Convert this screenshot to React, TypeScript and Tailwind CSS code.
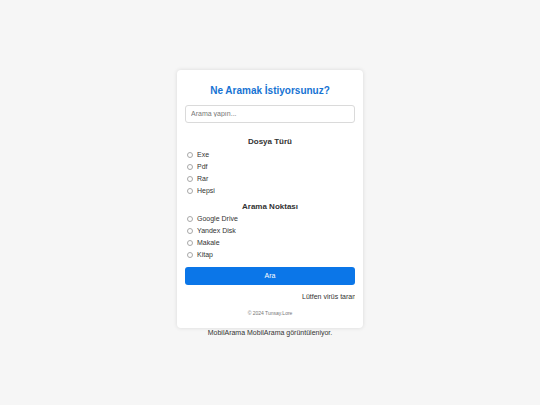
import { useState } from 'react';

const fileTypes = ['Exe', 'Pdf', 'Rar', 'Hepsi'];
const sources = ['Google Drive', 'Yandex Disk', 'Makale', 'Kitap'];

function RadioRow({ name, label, checked, onChange }: { name: string; label: string; checked: boolean; onChange: () => void }) {
  return (
    <label className="flex items-center h-[12px] cursor-pointer">
      <input
        type="radio"
        name={name}
        checked={checked}
        onChange={onChange}
        className="appearance-none w-[6px] h-[6px] ml-[2px] mr-[4px] rounded-full border-[0.5px] border-[#a8a8a8] bg-white checked:bg-[#0b76e8] checked:border-[#0b76e8]"
      />
      <span className="text-[7px] leading-[10px] text-[#333]">{label}</span>
    </label>
  );
}

export default function App() {
  const [query, setQuery] = useState('');
  const [fileType, setFileType] = useState('');
  const [source, setSource] = useState('');

  return (
    <div className="min-h-screen bg-[#f6f6f6] flex flex-col items-center justify-center font-['Liberation_Sans',Arial,sans-serif]">
      <div className="mt-[3px] w-[186px] bg-white rounded-[4px] shadow-[0_0_4px_rgba(0,0,0,0.12)] px-[8px] pt-[15px] pb-[11px]">
        <h1 className="text-center text-[10px] leading-[12px] font-bold text-[#1673d3]">Ne Aramak İstiyorsunuz?</h1>

        <input
          value={query}
          onChange={(e) => setQuery(e.target.value)}
          placeholder="Arama yapın..."
          className="mt-[8px] w-full h-[18px] px-[5px] text-[7px] border-[0.5px] border-[#dadada] rounded-[3px] outline-none placeholder:text-[#777]"
        />

        <h3 className="mt-[14px] text-center text-[8px] leading-[10px] font-bold text-[#333]">Dosya Türü</h3>
        <div className="mt-[2px] flex flex-col">
          {fileTypes.map((t) => (
            <RadioRow key={t} name="tur" label={t} checked={fileType === t} onChange={() => setFileType(t)} />
          ))}
        </div>

        <h3 className="mt-[5px] text-center text-[8px] leading-[10px] font-bold text-[#333]">Arama Noktası</h3>
        <div className="mt-[1px] flex flex-col">
          {sources.map((s) => (
            <RadioRow key={s} name="nokta" label={s} checked={source === s} onChange={() => setSource(s)} />
          ))}
        </div>

        <button className="mt-[6px] w-full h-[18px] rounded-[3px] bg-[#0b76e8] text-white text-[7px]">Ara</button>

        <div className="mt-[7px] overflow-hidden whitespace-nowrap">
          <p className="pl-[117px] text-[7px] leading-[10px] text-[#333]">Lütfen virüs taranmış dosyaları indirin.</p>
        </div>

        <p className="mt-[7px] text-center text-[5px] leading-[8px] text-[#777]">© 2024 Tunsay.Lore</p>
      </div>
      <p className="text-[7px] leading-[10px] text-[#333]">MobilArama MobilArama görüntüleniyor.</p>
    </div>
  );
}
